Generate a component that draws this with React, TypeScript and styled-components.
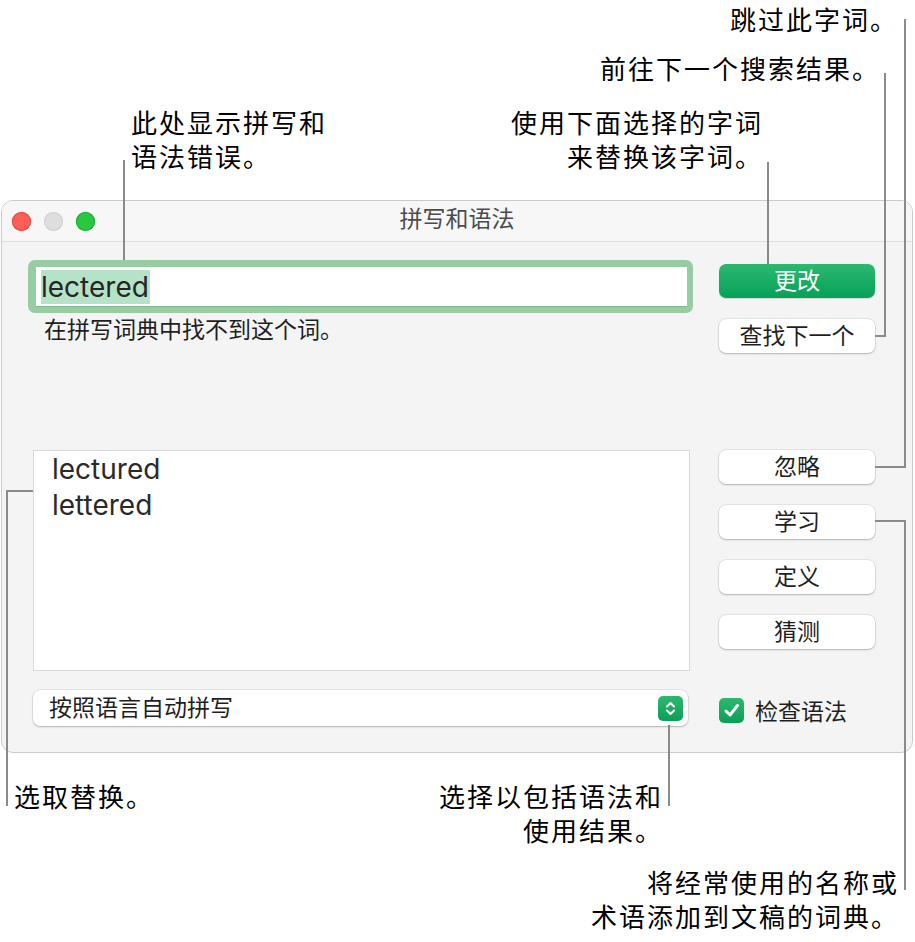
import React from 'react';
import styled, { createGlobalStyle, css } from 'styled-components';

const GlobalStyle = createGlobalStyle`
  html, body {
    margin: 0;
    padding: 0;
    background: #ffffff;
  }
  body {
    font-family: "Inter", "Noto Sans CJK SC", sans-serif;
    color: #262626;
  }
`;

const Page = styled.div`
  position: relative;
  width: 915px;
  height: 942px;
  box-sizing: border-box;
  padding: 200px 0 0 1px;
  background: #ffffff;
  overflow: hidden;
`;

const Window = styled.div`
  width: 912px;
  height: 553px;
  box-sizing: border-box;
  border: 1px solid #cacaca;
  border-radius: 12px;
  background: #f4f4f4;
  display: flex;
  flex-direction: column;
  overflow: hidden;
`;

const TitleBar = styled.div`
  height: 40px;
  flex: none;
  display: grid;
  grid-template-columns: 1fr auto 1fr;
  align-items: center;
  background: #f7f7f7;
  border-bottom: 1px solid #dddddd;
`;

const Lights = styled.div`
  display: flex;
  gap: 13px;
  padding-left: 10px;
`;

const Light = styled.span<{ $color: string; $edge: string }>`
  width: 19px;
  height: 19px;
  border-radius: 50%;
  background: ${({ $color }) => $color};
  box-shadow: inset 0 0 0 1px ${({ $edge }) => $edge};
`;

const Title = styled.div`
  font-family: "Noto Sans CJK SC", sans-serif;
  font-size: 23px;
  line-height: 30px;
  color: #4b4b4b;
  padding-bottom: 9px;
`;

const Body = styled.div`
  flex: 1;
  display: grid;
  grid-template-columns: 665px 156px;
  column-gap: 26px;
  padding-left: 26px;
`;

const LeftColumn = styled.div`
  display: flex;
  flex-direction: column;
`;

const RightColumn = styled.div`
  display: flex;
  flex-direction: column;
`;

const FieldRing = styled.div`
  margin-top: 18px;
  padding: 7px 6px 6px 8px;
  border-radius: 7px;
  background: #98cca3;
`;

const Field = styled.div`
  height: 39px;
  background: #ffffff;
  border-bottom: 1px solid #7db78b;
  display: flex;
  align-items: center;
  padding-left: 5px;
`;

const Selected = styled.span`
  font-size: 28px;
  line-height: 34px;
  background: #b5e3c7;
  color: #262626;
  padding-right: 1px;
`;

const Message = styled.div`
  margin: 1px 0 0 16px;
  font-family: "Noto Sans CJK SC", sans-serif;
  font-size: 23px;
  line-height: 28px;
  color: #1f1f1f;
`;

const List = styled.div`
  margin: 108px 0 0 5px;
  width: 657px;
  height: 221px;
  box-sizing: border-box;
  background: #ffffff;
  border: 1px solid #d8d8d8;
  padding-left: 18px;
`;

const ListItem = styled.div`
  font-size: 28px;
  line-height: 36px;
  color: #2a2a2a;
`;

const Popup = styled.div`
  margin: 19px 0 0 5px;
  width: 655px;
  height: 36px;
  box-sizing: border-box;
  border-radius: 7px;
  background: #ffffff;
  box-shadow: 0 0 0 0.5px rgba(0, 0, 0, 0.12), 0 1px 2px rgba(0, 0, 0, 0.22);
  display: flex;
  align-items: center;
  justify-content: space-between;
  padding: 0 5px 0 16px;
  font-family: "Noto Sans CJK SC", sans-serif;
  font-size: 23px;
  color: #1f1f1f;
`;

const PopupLabel = styled.span`
  padding-bottom: 5px;
`;

const Stepper = styled.span`
  width: 25px;
  height: 25px;
  border-radius: 5px;
  background: linear-gradient(#2cb96f, #0a9f56);
  display: flex;
  align-items: center;
  justify-content: center;
`;

const Button = styled.div<{ $primary?: boolean; $gap: number }>`
  margin-top: ${({ $gap }) => $gap}px;
  height: 34px;
  box-sizing: border-box;
  padding-bottom: 5px;
  border-radius: 7px;
  display: flex;
  align-items: center;
  justify-content: center;
  font-family: "Noto Sans CJK SC", sans-serif;
  font-size: 23px;
  ${({ $primary }) =>
    $primary
      ? css`
          background: linear-gradient(#2bb86f, #07a159);
          color: #ffffff;
          box-shadow: 0 1px 1px rgba(0, 0, 0, 0.12);
        `
      : css`
          background: #ffffff;
          color: #1f1f1f;
          box-shadow: 0 0 0 0.5px rgba(0, 0, 0, 0.12), 0 1px 2px rgba(0, 0, 0, 0.22);
        `}
`;

const CheckRow = styled.div`
  margin-top: 49px;
  height: 25px;
  display: flex;
  align-items: center;
  gap: 11px;
  font-family: "Noto Sans CJK SC", sans-serif;
  font-size: 23px;
  color: #1f1f1f;
`;

const CheckLabel = styled.span`
  line-height: 25px;
  padding-bottom: 1px;
`;

const CheckBox = styled.span`
  flex: none;
  width: 25px;
  height: 25px;
  border-radius: 5px;
  background: linear-gradient(#2cb96f, #0a9f56);
  display: flex;
  align-items: center;
  justify-content: center;
`;

const Note = styled.div<{ $left?: number; $right?: number; $top: number }>`
  position: absolute;
  top: ${({ $top }) => $top}px;
  ${({ $left }) => ($left !== undefined ? `left: ${$left}px;` : '')}
  ${({ $right }) => ($right !== undefined ? `right: ${$right}px; text-align: right;` : '')}
  font-family: "Noto Sans CJK SC", sans-serif;
  font-size: 26px;
  letter-spacing: 2px;
  line-height: 34px;
  color: #000000;
  white-space: nowrap;
`;

const Leaders = styled.svg`
  position: absolute;
  left: 0;
  top: 0;
  pointer-events: none;
`;

const leaderPaths = [
  'M124 160 V260',
  'M768 162 V264',
  'M885 73 V336 H875',
  'M905 19 V467 H875',
  'M875 521 H905 V890',
  'M33 491 H7 V806',
  'M669 725 V806',
];

const rightButtons = [
  { label: '忽略', gap: 97 },
  { label: '学习', gap: 21 },
  { label: '定义', gap: 21 },
  { label: '猜测', gap: 21 },
];

const App: React.FC = () => {
  return (
    <Page>
      <GlobalStyle />
      <Window>
        <TitleBar>
          <Lights>
            <Light $color="#fe5f57" $edge="#e9473f" />
            <Light $color="#dedede" $edge="#cfcfcf" />
            <Light $color="#28c840" $edge="#1eac31" />
          </Lights>
          <Title>拼写和语法</Title>
          <span />
        </TitleBar>
        <Body>
          <LeftColumn>
            <FieldRing>
              <Field>
                <Selected>lectered</Selected>
              </Field>
            </FieldRing>
            <Message>在拼写词典中找不到这个词。</Message>
            <List>
              <ListItem>lectured</ListItem>
              <ListItem>lettered</ListItem>
            </List>
            <Popup>
              <PopupLabel>按照语言自动拼写</PopupLabel>
              <Stepper>
                <svg width="13" height="17" viewBox="0 0 13 17">
                  <path d="M3 6.5 L6.5 3 L10 6.5 M3 10.5 L6.5 14 L10 10.5" fill="none" stroke="#fff" strokeWidth="2" strokeLinecap="round" strokeLinejoin="round" />
                </svg>
              </Stepper>
            </Popup>
          </LeftColumn>
          <RightColumn>
            <Button $primary $gap={22}>更改</Button>
            <Button $gap={21}>查找下一个</Button>
            {rightButtons.map((b) => (
              <Button key={b.label} $gap={b.gap}>
                {b.label}
              </Button>
            ))}
            <CheckRow>
              <CheckBox>
                <svg width="19" height="19" viewBox="0 0 19 19">
                  <path d="M4 10 L8 14 L15.5 4.5" fill="none" stroke="#fff" strokeWidth="3" strokeLinecap="round" strokeLinejoin="round" />
                </svg>
              </CheckBox>
              <CheckLabel>检查语法</CheckLabel>
            </CheckRow>
          </RightColumn>
        </Body>
      </Window>

      <Note $right={17} $top={2}>跳过此字词。</Note>
      <Note $right={35} $top={51}>前往下一个搜索结果。</Note>
      <Note $right={152} $top={105}>
        使用下面选择的字词
        <br />
        来替换该字词。
      </Note>
      <Note $left={131} $top={105}>
        此处显示拼写和
        <br />
        语法错误。
      </Note>
      <Note $left={14} $top={779}>选取替换。</Note>
      <Note $right={252} $top={779}>
        选择以包括语法和
        <br />
        使用结果。
      </Note>
      <Note $right={16} $top={865}>
        将经常使用的名称或
        <br />
        术语添加到文稿的词典。
      </Note>

      <Leaders width="915" height="942" viewBox="0 0 915 942">
        {leaderPaths.map((d) => (
          <path key={d} d={d} fill="none" stroke="#8a8a8a" strokeWidth="2" />
        ))}
      </Leaders>
    </Page>
  );
};

export default App;
